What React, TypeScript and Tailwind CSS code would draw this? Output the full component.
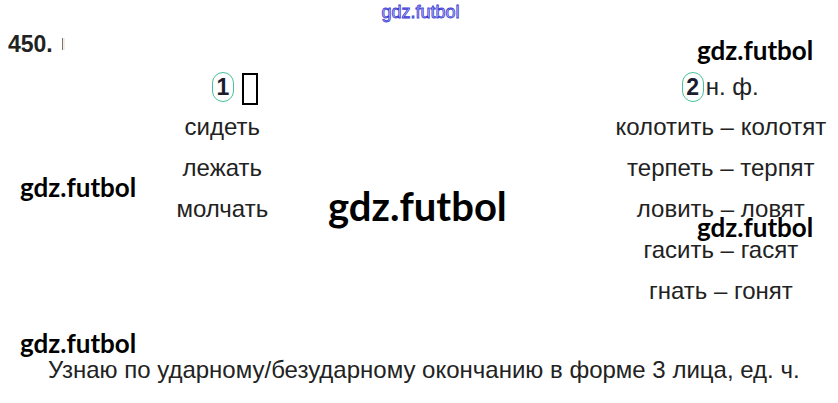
import React from "react";

const WM = ({ className }: { className: string }) => (
  <div
    className={`absolute text-black leading-none font-bold ${className}`}
    style={{ fontFamily: "Lato, 'Open Sans', sans-serif" }}
  >
    gdz.futbol
  </div>
);

const Oval = ({ n }: { n: string }) => (
  <span className="inline-flex items-center justify-center w-[22px] h-[30px] rounded-full border-[1.5px] border-[#46c29c] text-[23px] font-bold text-[#1c1c30] leading-none">
    {n}
  </span>
);

export default function App() {
  const left = ["сидеть", "лежать", "молчать"];
  const right = [
    "колотить – колотят",
    "терпеть – терпят",
    "ловить – ловят",
    "гасить – гасят",
    "гнать – гонят",
  ];
  return (
    <div
      className="relative w-[838px] h-[403px] bg-white overflow-hidden text-[#222]"
      style={{ fontFamily: "'Liberation Sans', Arial, sans-serif" }}
    >
      <div className="flex justify-center pt-[3px] h-[30px]">
        <span className="text-[18px] leading-none text-[#c8c8f4] [-webkit-text-stroke:0.8px_#3a3ad6] ml-[3px]">
          gdz.futbol
        </span>
      </div>
      <div className="flex items-center pl-[8px] h-[28px]">
        <span className="text-[23px] font-bold leading-none">450.</span>
        <span className="ml-[9px] w-[3px] h-[12px] border-l border-[#777] bg-[#f5ecd9]" />
      </div>
      <div className="flex mt-[14px]">
        <div className="w-[140px] ml-[154px] flex flex-col">
          <div className="h-[34px] flex items-start pl-[58px] gap-[8px]">
            <Oval n="1" />
            <span className="w-[16px] h-[32px] border-2 border-black mt-[1px]" />
          </div>
          {left.map((t) => (
            <div key={t} className="h-[41px] leading-[41px] text-[24px] text-center">
              {t}
            </div>
          ))}
        </div>
        <div className="w-[240px] ml-[313px] flex flex-col">
          <div className="h-[34px] flex items-start pl-[78px] gap-[2px]">
            <Oval n="2" />
            <span className="text-[24px] leading-[30px]">н. ф.</span>
          </div>
          {right.map((t) => (
            <div key={t} className="h-[41px] leading-[41px] text-[24px] text-center whitespace-nowrap">
              {t}
            </div>
          ))}
        </div>
      </div>
      <div className="absolute left-[48px] top-[356px] text-[24px] leading-[28px] text-[#222] whitespace-nowrap">
        Узнаю по ударному/безударному окончанию в форме 3 лица, ед. ч.
      </div>
      <WM className="left-[697px] top-[37px] text-[26px]" />
      <WM className="left-[20px] top-[174px] text-[26px]" />
      <WM className="left-[328px] top-[186px] text-[40px]" />
      <WM className="left-[697px] top-[214px] text-[26px]" />
      <WM className="left-[20px] top-[330px] text-[26px]" />
    </div>
  );
}
